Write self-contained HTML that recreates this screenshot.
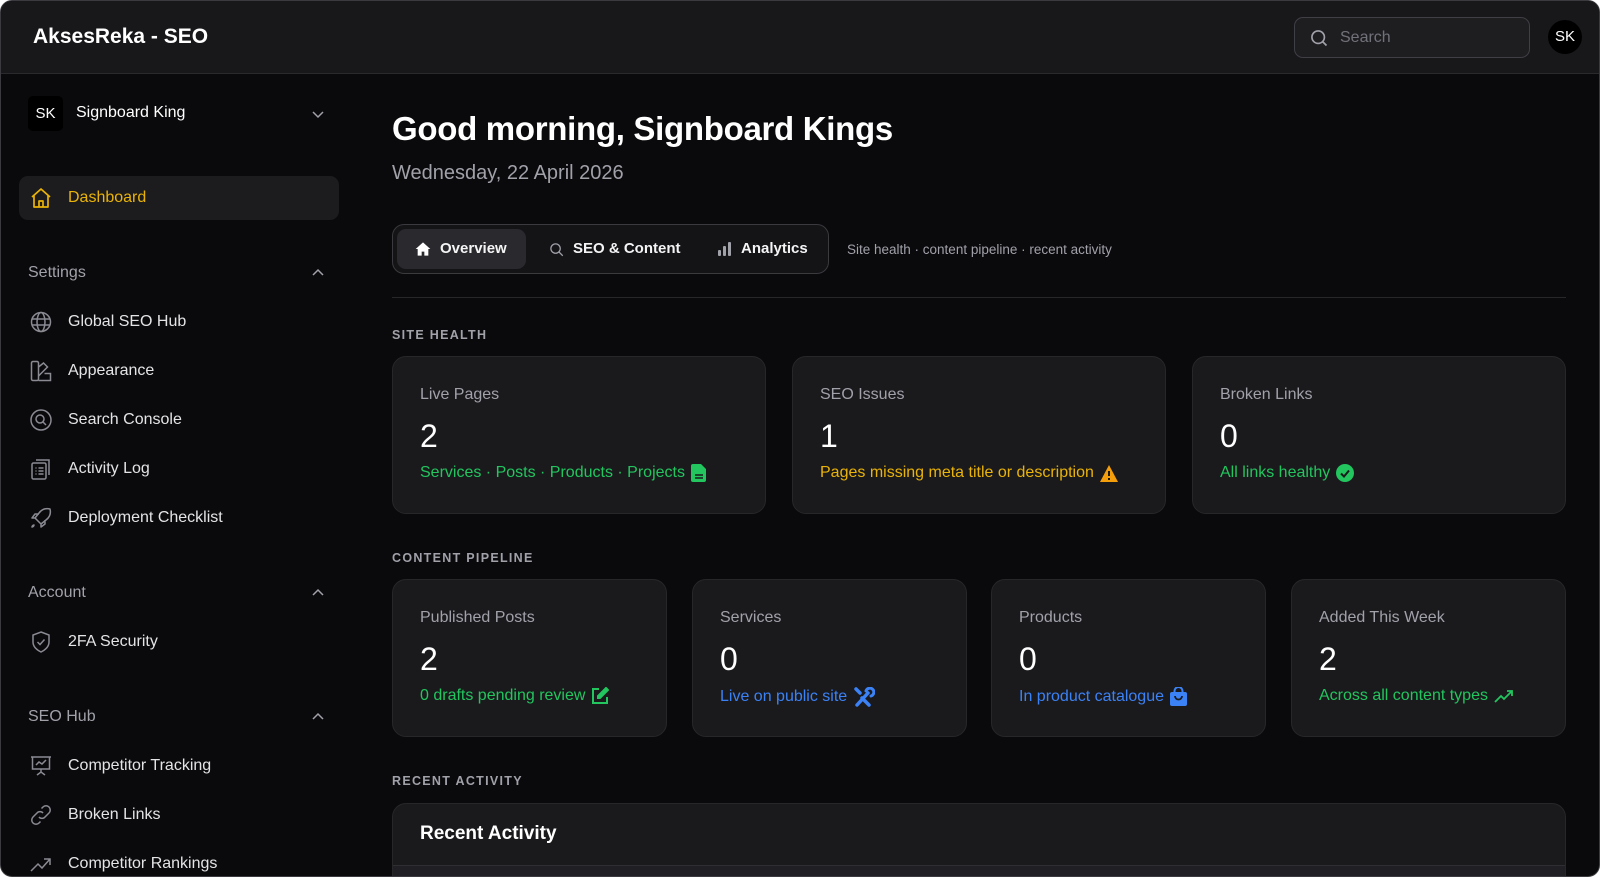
<!DOCTYPE html>
<html><head><meta charset="utf-8"><style>
*{box-sizing:border-box;margin:0;padding:0}
html,body{width:1600px;height:877px;overflow:hidden;background:#fff}
body{font-family:"Liberation Sans",sans-serif;color:#f4f4f5}
.frame{position:absolute;left:0;top:0;width:1600px;height:877px;background:#0a0a0c;border:1px solid #3a3a3f;border-radius:12px;overflow:hidden}
.hdr{position:absolute;left:0;top:0;width:1600px;height:73px;background:#18181b;border-bottom:1px solid #2a2a2e}
.logo{position:absolute;left:32px;top:24px;font-size:21px;font-weight:bold;color:#fff}
.search{position:absolute;left:1293px;top:16px;width:236px;height:41px;border:1px solid #3f3f46;border-radius:9px;background:#1e1e21}
.search span{position:absolute;left:45px;top:11px;color:#71717a;font-size:16px}
.avatar{position:absolute;left:1547px;top:19px;width:34px;height:34px;border-radius:50%;background:#000;color:#fff;font-size:15px;text-align:center;line-height:34px}
.ws{position:absolute;left:27px;top:95px;width:35px;height:35px;background:#000;border-radius:5px;color:#fff;font-size:15px;text-align:center;line-height:35px}
.abs{position:absolute}
.nav{position:absolute;left:67px;font-size:16px;color:#e4e4e7;transform:translateY(-50%)}
.sec{position:absolute;left:27px;font-size:16px;color:#a1a1aa;transform:translateY(-50%)}
.ic{position:absolute;left:28px;width:24px;height:24px;transform:translateY(-50%)}
.chev{position:absolute;left:310px;width:14px;height:14px;transform:translateY(-50%)}
h1{position:absolute;left:391px;top:109px;font-size:33px;font-weight:bold;color:#fff;letter-spacing:-0.3px}
.date{position:absolute;left:391px;top:161px;font-size:20px;color:#a1a1aa}
.tabs{position:absolute;left:391px;top:223px;width:437px;height:50px;border:1px solid #3a3a3f;border-radius:12px;background:#141417}
.tab{position:absolute;top:0;line-height:48px;font-size:15px;font-weight:bold;color:#f4f4f5}
.tact{position:absolute;left:4px;top:4px;width:129px;height:40px;background:#2a2a2e;border-radius:9px}
.tabnote{position:absolute;left:846px;top:241px;font-size:13.5px;color:#a1a1aa}
.divl{position:absolute;left:391px;top:296px;width:1174px;height:1px;background:#27272a}
.lbl{position:absolute;left:391px;font-size:12.5px;font-weight:bold;letter-spacing:1.3px;color:#a1a1aa}
.card{position:absolute;background:#1a1a1d;border:1px solid #27272a;border-radius:14px}
.card .t{position:absolute;left:27px;top:29px;font-size:16px;color:#a1a1aa}
.card .n{position:absolute;left:27px;top:61px;font-size:32px;color:#fff}
.card .s{position:absolute;left:27px;top:107px;font-size:16px;white-space:nowrap;display:flex;align-items:center;gap:6px}
.g{color:#22c55e}.y{color:#eab308}.b{color:#3b82f6}
</style></head><body><div class="frame">
<div class="hdr">
<div class="logo">AksesReka - SEO</div>
<div class="search"><svg class="abs" style="left:14px;top:10px" width="20" height="20" viewBox="0 0 24 24" fill="none" stroke="#a1a1aa" stroke-width="2"><circle cx="11" cy="11" r="7.5"/><path d="M16.5 16.5L21 21"/></svg><span>Search</span></div>
<div class="avatar">SK</div>
</div>

<div class="ws">SK</div>
<div class="nav" style="left:75px;top:112px;color:#fff">Signboard King</div>
<svg class="chev" style="top:113px" viewBox="0 0 14 14" fill="none" stroke="#a1a1aa" stroke-width="1.5"><path d="M2 5l5 5 5-5"/></svg>

<div class="abs" style="left:18px;top:175px;width:320px;height:44px;background:#1c1c1f;border-radius:9px"></div>
<svg class="ic" style="top:197px" viewBox="0 0 24 24" fill="none" stroke="#eab308" stroke-width="1.7" stroke-linejoin="round"><path d="M3 11L12 3l9 8M5 9.5V21h14V9.5M10 21v-6h4v6"/></svg>
<div class="nav" style="top:197px;color:#eab308">Dashboard</div>

<div class="sec" style="top:272px">Settings</div>
<svg class="chev" style="top:272px" viewBox="0 0 14 14" fill="none" stroke="#a1a1aa" stroke-width="1.5"><path d="M2 9l5-5 5 5"/></svg>
<svg class="ic" style="top:321px" viewBox="0 0 24 24" fill="none" stroke="#8a8a93" stroke-width="1.5"><circle cx="12" cy="12" r="9.5"/><ellipse cx="12" cy="12" rx="4" ry="9.5"/><path d="M3 9h18M3 15h18"/></svg>
<div class="nav" style="top:321px">Global SEO Hub</div>
<svg class="ic" style="top:370px" viewBox="0 0 24 24" fill="none" stroke="#8a8a93" stroke-width="1.5"><rect x="2.5" y="2.5" width="7" height="19" rx="1.5"/><path d="M9.5 8l5-4 4 4-9 9M9.5 21.5h12v-7h-6"/></svg>
<div class="nav" style="top:370px">Appearance</div>
<svg class="ic" style="top:419px" viewBox="0 0 24 24" fill="none" stroke="#8a8a93" stroke-width="1.5"><circle cx="12" cy="12" r="10"/><circle cx="11" cy="11" r="4"/><path d="M14 14l3 3"/></svg>
<div class="nav" style="top:419px">Search Console</div>
<svg class="ic" style="top:468px" viewBox="0 0 24 24" fill="none" stroke="#8a8a93" stroke-width="1.5"><rect x="3" y="6" width="14" height="16" rx="1.5"/><path d="M7 3h13v15M6.5 11h1M9.5 11h5M6.5 14h1M9.5 14h5M6.5 17h1M9.5 17h5"/></svg>
<div class="nav" style="top:468px">Activity Log</div>
<svg class="ic" style="top:517px" viewBox="0 0 24 24" fill="none" stroke="#8a8a93" stroke-width="1.5" stroke-linejoin="round"><path d="M9 15l-3-3 4-5C13 3 17 2 21 3c1 4 0 8-4 11l-5 4-3-3zM6 12l-3 0 3-4h4M12 18v3l4-3v-4M5 19c-1 0-2 1-2 2 1 0 2-1 2-2z"/></svg>
<div class="nav" style="top:517px">Deployment Checklist</div>

<div class="sec" style="top:592px">Account</div>
<svg class="chev" style="top:592px" viewBox="0 0 14 14" fill="none" stroke="#a1a1aa" stroke-width="1.5"><path d="M2 9l5-5 5 5"/></svg>
<svg class="ic" style="top:641px" viewBox="0 0 24 24" fill="none" stroke="#8a8a93" stroke-width="1.5"><path d="M12 2l8 3v7c0 5-4 8-8 10-4-2-8-5-8-10V5z"/><path d="M8.5 12l2.5 2.5 4.5-5"/></svg>
<div class="nav" style="top:641px">2FA Security</div>

<div class="sec" style="top:716px">SEO Hub</div>
<svg class="chev" style="top:716px" viewBox="0 0 14 14" fill="none" stroke="#a1a1aa" stroke-width="1.5"><path d="M2 9l5-5 5 5"/></svg>
<svg class="ic" style="top:765px" viewBox="0 0 24 24" fill="none" stroke="#8a8a93" stroke-width="1.5"><path d="M2 3h20M3.5 3v12h17V3M12 15v3M8 21l4-3 4 3M7 11l3-3 3 2 4-4"/></svg>
<div class="nav" style="top:765px">Competitor Tracking</div>
<svg class="ic" style="top:814px" viewBox="0 0 24 24" fill="none" stroke="#8a8a93" stroke-width="1.5"><path d="M10 14a4 4 0 0 0 6 0l4-4a4 4 0 0 0-6-6l-1.5 1.5M14 10a4 4 0 0 0-6 0l-4 4a4 4 0 0 0 6 6l1.5-1.5"/></svg>
<div class="nav" style="top:814px">Broken Links</div>
<svg class="ic" style="top:863px" viewBox="0 0 24 24" fill="none" stroke="#8a8a93" stroke-width="1.5"><path d="M2 19l7-7 4 4 8-9M15 7h6v6"/></svg>
<div class="nav" style="top:863px">Competitor Rankings</div>

<h1>Good morning, Signboard Kings</h1>
<div class="date">Wednesday, 22 April 2026</div>

<div class="tabs">
<div class="tact"></div>
<svg class="abs" style="left:22px;top:16px" width="16" height="16" viewBox="0 0 24 24" fill="#fff"><path d="M12 2L1 12h3v10h6v-6h4v6h6V12h3z"/></svg>
<div class="tab" style="left:47px">Overview</div>
<svg class="abs" style="left:156px;top:17px" width="15" height="15" viewBox="0 0 24 24" fill="none" stroke="#a1a1aa" stroke-width="2"><circle cx="10.5" cy="10.5" r="7.5"/><path d="M16 16l6 6"/></svg>
<div class="tab" style="left:180px">SEO &amp; Content</div>
<svg class="abs" style="left:324px;top:16px" width="16" height="16" viewBox="0 0 16 16" fill="#a1a1aa"><rect x="1" y="9" width="3" height="6" rx="1"/><rect x="6" y="5" width="3" height="10" rx="1"/><rect x="11" y="1" width="3" height="14" rx="1"/></svg>
<div class="tab" style="left:348px">Analytics</div>
</div>
<div class="tabnote">Site health · content pipeline · recent activity</div>
<div class="divl"></div>

<div class="lbl" style="top:327px">SITE HEALTH</div>
<div class="card" style="left:391px;top:355px;width:374px;height:158px"><div class="t">Live Pages</div><div class="n">2</div><div class="s g">Services · Posts · Products · Projects <svg width="16" height="18" viewBox="0 0 16 18"><path d="M2 0h8l5 5v11a2 2 0 0 1-2 2H2a2 2 0 0 1-2-2V2a2 2 0 0 1 2-2z" fill="#22c55e"/><path d="M4 11h8M4 14h8" stroke="#1a1a1d" stroke-width="1.6"/></svg></div></div>
<div class="card" style="left:791px;top:355px;width:374px;height:158px"><div class="t">SEO Issues</div><div class="n">1</div><div class="s y">Pages missing meta title or description <svg width="18" height="17" viewBox="0 0 18 17"><path d="M9 0L18 17H0z" fill="#f59e0b"/><path d="M9 6v5M9 13v2" stroke="#1a1a1d" stroke-width="2"/></svg></div></div>
<div class="card" style="left:1191px;top:355px;width:374px;height:158px"><div class="t">Broken Links</div><div class="n">0</div><div class="s g">All links healthy <svg width="18" height="18" viewBox="0 0 18 18"><circle cx="9" cy="9" r="9" fill="#22c55e"/><path d="M5 9.5l3 3 5-6" stroke="#1a1a1d" stroke-width="2" fill="none"/></svg></div></div>

<div class="lbl" style="top:550px">CONTENT PIPELINE</div>
<div class="card" style="left:391px;top:578px;width:275px;height:158px"><div class="t">Published Posts</div><div class="n">2</div><div class="s g">0 drafts pending review <svg width="18" height="18" viewBox="0 0 18 18" fill="none" stroke="#22c55e" stroke-width="2"><path d="M8 2H2v14h14v-6"/><path d="M15 1l2 2-8 8H7V9z" fill="#22c55e"/></svg></div></div>
<div class="card" style="left:691px;top:578px;width:275px;height:158px"><div class="t">Services</div><div class="n">0</div><div class="s b">Live on public site <svg width="22" height="20" viewBox="0 0 22 20" fill="none" stroke="#3b82f6" stroke-linecap="round"><path d="M4 18L15 6" stroke-width="3.5"/><path d="M13 4a4 4 0 1 1 5 5" stroke-width="3"/><path d="M3 2l4 4M9 11l7 7" stroke-width="3.5"/></svg></div></div>
<div class="card" style="left:990px;top:578px;width:275px;height:158px"><div class="t">Products</div><div class="n">0</div><div class="s b">In product catalogue <svg width="17" height="19" viewBox="0 0 17 19"><rect x="0" y="5" width="17" height="14" rx="2" fill="#3b82f6"/><path d="M4.5 7V4a4 4 0 0 1 8 0v3" stroke="#3b82f6" stroke-width="2" fill="none"/><path d="M5 9a3.5 3.5 0 0 0 7 0" stroke="#1a1a1d" stroke-width="1.8" fill="none"/></svg></div></div>
<div class="card" style="left:1290px;top:578px;width:275px;height:158px"><div class="t">Added This Week</div><div class="n">2</div><div class="s g">Across all content types <svg width="20" height="14" viewBox="0 0 20 14" fill="none" stroke="#22c55e" stroke-width="1.8"><path d="M1 13l6-6 3 3 8-8M13 2h5v5"/></svg></div></div>

<div class="lbl" style="top:773px">RECENT ACTIVITY</div>
<div class="card" style="left:391px;top:802px;width:1174px;height:100px;border-radius:14px 14px 0 0"><div style="position:absolute;left:27px;top:19px;font-size:19px;font-weight:bold;color:#fff">Recent Activity</div><div style="position:absolute;left:0;top:61px;width:100%;height:40px;background:#202024;border-top:1px solid #2e2e33"></div></div>
</div></body></html>
